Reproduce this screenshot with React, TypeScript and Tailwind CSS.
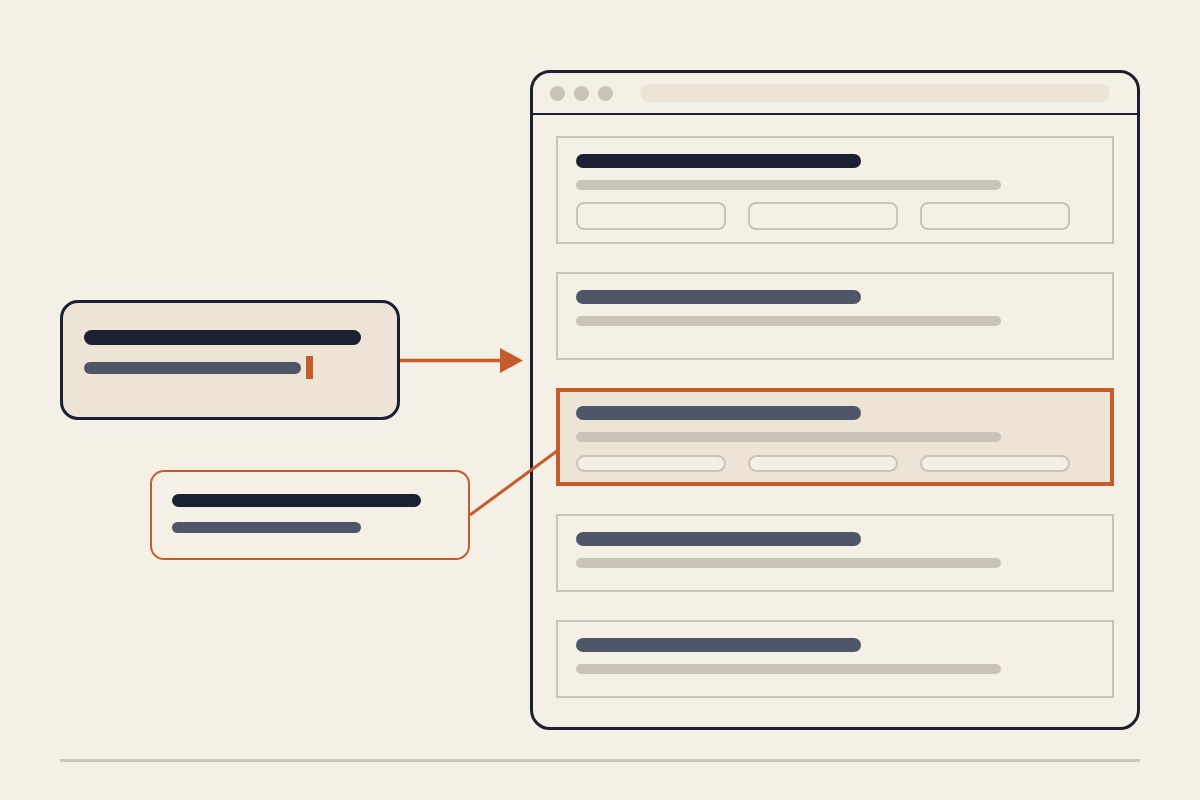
const cards = [
  { h: "h-[108px]", tone: "dark", buttons: true },
  { h: "h-[88px]", tone: "slate", buttons: false },
  { h: "h-[98px]", tone: "slate", buttons: true, active: true },
  { h: "h-[78px]", tone: "slate", buttons: false },
  { h: "h-[78px]", tone: "slate", buttons: false },
];

function ListCard({ h, tone, buttons, active }: { h: string; tone: string; buttons: boolean; active?: boolean }) {
  if (active) {
    return (
      <div className={`${h} border-4 border-[#c65b2d] bg-[#ede4d5] pl-4 pt-[14px]`}>
        <div className="w-[285px] h-[14px] rounded-full bg-[#4f5667]" />
        <div className="mt-3 w-[425px] h-[10px] rounded-full bg-[#c9c3b8]" />
        <div className="mt-[13px] flex gap-[22px]">
          {[0, 1, 2].map((i) => (
            <div key={i} className="w-[150px] h-[17px] rounded-full border-2 border-[#c9c3b8] bg-[#f5f0e6]" />
          ))}
        </div>
      </div>
    );
  }
  return (
    <div className={`${h} border-2 border-[#c9c3b8] px-[18px] pt-4`}>
      <div className={`w-[285px] h-[14px] rounded-full ${tone === "dark" ? "bg-[#1b2033]" : "bg-[#4f5667]"}`} />
      <div className="mt-3 w-[425px] h-[10px] rounded-full bg-[#c9c3b8]" />
      {buttons && (
        <div className="mt-3 flex gap-[22px]">
          {[0, 1, 2].map((i) => (
            <div key={i} className="w-[150px] h-[28px] rounded-lg border-2 border-[#c9c3b8]" />
          ))}
        </div>
      )}
    </div>
  );
}

export default function App() {
  return (
    <div className="relative w-[1200px] h-[800px] overflow-hidden bg-[#f5f0e6]">
      {/* source field */}
      <div className="absolute left-[60px] top-[300px] w-[340px] h-[120px] rounded-[18px] border-[3px] border-[#1b2033] bg-[#ede4d5] pl-[21px] pt-[27px]">
        <div className="w-[277px] h-[15px] rounded-full bg-[#1b2033]" />
        <div className="mt-[11px] flex items-center">
          <div className="w-[217px] h-[12px] rounded-full bg-[#4f5667]" />
          <div className="ml-[5px] w-[7px] h-[23px] bg-[#c65b2d]" />
        </div>
      </div>

      {/* suggestion */}
      <div className="absolute left-[150px] top-[470px] w-[320px] h-[90px] rounded-[14px] border-2 border-[#c65b2d] pl-5 pt-[22px]">
        <div className="w-[249px] h-[13px] rounded-full bg-[#1b2033]" />
        <div className="mt-[15px] w-[189px] h-[11px] rounded-full bg-[#4f5667]" />
      </div>

      {/* browser window */}
      <div className="absolute left-[530px] top-[70px] w-[610px] h-[660px] rounded-[20px] border-[3px] border-[#1b2033] flex flex-col">
        <div className="h-[42px] border-b-2 border-[#1b2033] flex items-center pl-[17px] pr-[27px]">
          <div className="flex gap-[9px]">
            <div className="w-[15px] h-[15px] rounded-full bg-[#c9c3b8]" />
            <div className="w-[15px] h-[15px] rounded-full bg-[#c9c3b8]" />
            <div className="w-[15px] h-[15px] rounded-full bg-[#c9c3b8]" />
          </div>
          <div className="ml-[27px] flex-1 h-[18px] rounded-full bg-[#ede4d5]" />
        </div>
        <div className="flex flex-col gap-[28px] px-[23px] pt-[21px]">
          {cards.map((c, i) => (
            <ListCard key={i} {...c} />
          ))}
        </div>
      </div>

      {/* connectors */}
      <svg className="absolute inset-0 pointer-events-none" width="1200" height="800" viewBox="0 0 1200 800">
        <line x1="400" y1="360.5" x2="503" y2="360.5" stroke="#c65b2d" strokeWidth="3.5" />
        <polygon points="500,348 523,360.5 500,373" fill="#c65b2d" />
        <line x1="470" y1="515" x2="557" y2="451" stroke="#c65b2d" strokeWidth="3" />
      </svg>

      <div className="absolute left-[60px] top-[759px] w-[1080px] h-[3px] bg-[#cdc6ba]" />
    </div>
  );
}
